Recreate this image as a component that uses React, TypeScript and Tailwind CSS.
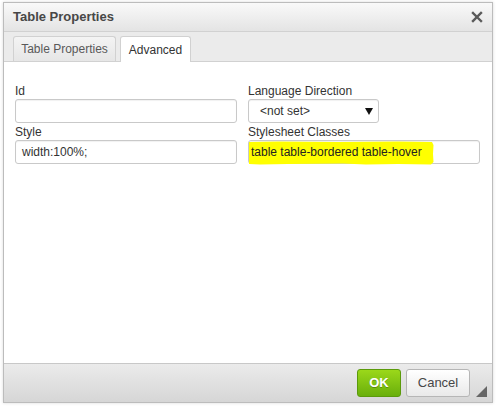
import React from 'react'

const Field: React.FC<{ label: string; children: React.ReactNode }> = ({ label, children }) => (
  <div className="flex flex-col">
    <label className="h-[16px] text-[12px] leading-[16px] text-[#333]">{label}</label>
    {children}
  </div>
)

const inputBox =
  'h-[24px] rounded-[3px] border border-[#c9c9c9] bg-white shadow-[inset_0_1px_1px_rgba(0,0,0,0.06)] px-[6px] text-[12px] leading-[22px] text-[#333]'

const App: React.FC = () => {
  return (
    <div
      className="w-[496px] h-[406px] bg-white pt-[2px] pl-[3px] overflow-hidden"
      style={{ fontFamily: '"Liberation Sans", Arial, sans-serif' }}
    >
      <div className="w-[490px] h-[401px] flex flex-col border border-[#bcbcbc] shadow-[0_0_3px_rgba(0,0,0,0.15)] bg-white">
        {/* title bar */}
        <div className="h-[29px] flex items-center justify-between pl-[9px] pr-[8px] bg-gradient-to-b from-[#f9f9f9] to-[#e4e4e4] border-b border-[#d1d1d1]">
          <span className="text-[13px] font-bold text-[#474747]">Table Properties</span>
          <svg width="12" height="12" viewBox="0 0 12 12" className="mr-[1px]">
            <path d="M2 2 L10 10 M10 2 L2 10" stroke="#5a5a5a" strokeWidth="2.4" strokeLinecap="square" />
          </svg>
        </div>

        {/* tabs */}
        <div className="h-[30px] flex items-end gap-[4px] pl-[9px] bg-[#ebebeb] border-b border-[#d1d1d1]">
          <div className="h-[25px] w-[103px] flex items-center justify-center rounded-t-[3px] border border-b-0 border-[#d1d1d1] bg-gradient-to-b from-[#f4f4f4] to-[#e6e6e6] text-[12px] text-[#595959]">
            Table Properties
          </div>
          <div className="h-[26px] w-[71px] -mb-[1px] flex items-center justify-center rounded-t-[3px] border border-b-0 border-[#d1d1d1] bg-white text-[12px] text-[#333]">
            Advanced
          </div>
        </div>

        {/* content */}
        <div className="flex-1 pt-[21px] pl-[11px] pr-[12px]">
          <div className="grid grid-cols-[222px_1fr] gap-x-[11px] gap-y-[1px]">
            <Field label="Id">
              <div className={inputBox} />
            </Field>
            <Field label="Language Direction">
              <div className={`${inputBox} w-[131px] flex items-center justify-between pl-[11px] pr-[5px]`}>
                <span>&lt;not set&gt;</span>
                <svg width="8" height="7" viewBox="0 0 8 7">
                  <path d="M0 0 H8 L4 7 Z" fill="#111" />
                </svg>
              </div>
            </Field>
            <Field label="Style">
              <div className={inputBox}>width:100%;</div>
            </Field>
            <Field label="Stylesheet Classes">
              <div className={`${inputBox} relative pl-[2px]`}>
                <svg
                  className="absolute -left-[1px] -top-[1px]"
                  width="187"
                  height="26"
                  viewBox="0 0 187 26"
                >
                  <path
                    d="M1 2 L30 1.5 L90 2 L150 1.5 L184 2 L185.5 5 L185 14 L185.5 22 L183 24.5 L150 24 L118 24.5 L95 23.5 L40 24 L12 24.5 L1 24 Z"
                    fill="#ffff00"
                  />
                </svg>
                <span className="relative text-[#222]">table table-bordered table-hover</span>
              </div>
            </Field>
          </div>
        </div>

        {/* footer */}
        <div className="h-[39px] flex items-start justify-end pt-[5px] pr-[5px] border-t border-[#c8c8c8] bg-gradient-to-b from-[#ebebeb] to-[#d6d6d6]">
          <button className="h-[28px] w-[44px] rounded-[3px] border border-[#5b9a0b] bg-gradient-to-b from-[#9bd81a] to-[#69af0b] text-[13px] font-bold text-white [text-shadow:0_1px_0_rgba(0,0,0,0.25)]">
            OK
          </button>
          <button className="ml-[5px] h-[28px] w-[64px] rounded-[3px] border border-[#b6b6b6] bg-gradient-to-b from-[#ffffff] to-[#e9e9e9] text-[13px] text-[#474747]">
            Cancel
          </button>
          <svg width="11" height="11" viewBox="0 0 11 11" className="ml-[6px] mt-[17px]">
            <path d="M11 0 V11 H0 Z" fill="#666" />
          </svg>
        </div>
      </div>
    </div>
  )
}

export default App
